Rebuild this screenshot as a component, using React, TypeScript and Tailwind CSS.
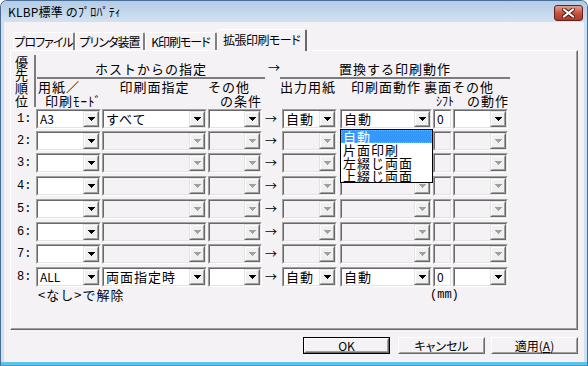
import React from 'react';

const JP = "font-['Noto_Sans_CJK_JP',sans-serif]";
const MONO = "font-['Liberation_Mono',monospace]";

type Row = {
  n: string;
  mt: string;
  a: string;
  b: string;
  c: string;
  d: string;
  e: string;
  f: string;
  g: string;
  on: boolean;
  drop?: boolean;
};

const ROWS: Row[] = [
  { n: '1', mt: 'mt-[1px]', a: 'A3', b: 'すべて', c: '', d: '自動', e: '自動', f: '0', g: '', on: true, drop: true },
  { n: '2', mt: 'mt-[2px]', a: '', b: '', c: '', d: '', e: '', f: '', g: '', on: false },
  { n: '3', mt: 'mt-[2px]', a: '', b: '', c: '', d: '', e: '', f: '', g: '', on: false },
  { n: '4', mt: 'mt-[3px]', a: '', b: '', c: '', d: '', e: '', f: '', g: '', on: false },
  { n: '5', mt: 'mt-[3px]', a: '', b: '', c: '', d: '', e: '', f: '', g: '', on: false },
  { n: '6', mt: 'mt-[3px]', a: '', b: '', c: '', d: '', e: '', f: '', g: '', on: false },
  { n: '7', mt: 'mt-[2px]', a: '', b: '', c: '', d: '', e: '', f: '', g: '', on: false },
  { n: '8', mt: 'mt-[3px]', a: 'ALL', b: '両面指定時', c: '', d: '自動', e: '自動', f: '0', g: '', on: true },
];

const MENU = ['自動', '片面印刷', '左綴じ両面', '上綴じ両面'];

function Tri({ on }: { on: boolean }) {
  return (
    <svg width="7" height="4" viewBox="0 0 7 4" shapeRendering="crispEdges" className="block">
      <path d="M0 0h7v1H0zM1 1h5v1H1zM2 2h3v1H2zM3 3h1v1H3z" fill={on ? '#000' : '#a0a0a0'} />
    </svg>
  );
}

function Txt({ t }: { t: string }) {
  if (!t) return null;
  const wide = /[^\x00-\x7f]/.test(t);
  return (
    <span className={wide ? 'pl-[2px] text-[13px] leading-[16px] tracking-[1px]' : 'pl-[2px] text-[12px] leading-[16px]'}>
      {t}
    </span>
  );
}

function Sunken({ w, on, children }: { w: string; on: boolean; children?: React.ReactNode }) {
  return (
    <div className={`${w} h-[20px] shrink-0 border border-t-[#a0a0a0] border-l-[#a0a0a0] border-b-white border-r-white`}>
      <div
        className={`flex h-full items-center border border-t-[#696969] border-l-[#696969] border-b-[#e3e3e3] border-r-[#e3e3e3] ${
          on ? 'bg-white' : 'bg-[#f5f2f5]'
        }`}
      >
        {children}
      </div>
    </div>
  );
}

function Combo({ w, on, text }: { w: string; on: boolean; text: string }) {
  return (
    <Sunken w={w} on={on}>
      <div className="flex h-full min-w-0 flex-1 items-center whitespace-nowrap">
        <Txt t={text} />
      </div>
      <div className="h-full w-[16px] shrink-0 border border-t-[#e3e3e3] border-l-[#e3e3e3] border-b-[#696969] border-r-[#696969] bg-[#f0f0f0]">
        <div className="flex h-full items-center justify-center border border-t-white border-l-white border-b-[#a0a0a0] border-r-[#a0a0a0]">
          <Tri on={on} />
        </div>
      </div>
    </Sunken>
  );
}

function DataRow({ r }: { r: Row }) {
  return (
    <div className={`${r.mt} flex h-[20px] items-center`}>
      <div className={`w-[25px] shrink-0 pl-[6px] text-[12px] ${MONO}`}>{r.n}:</div>
      <Combo w="w-[65px]" on text={r.a} />
      <div className="ml-[1px]">
        <Combo w="w-[105px]" on={r.on} text={r.b} />
      </div>
      <div className="ml-[1px]">
        <Combo w="w-[54px]" on={r.on} text={r.c} />
      </div>
      <div className="w-[20px] shrink-0 pl-[3px] text-[12px] leading-[16px]">→</div>
      <Combo w="w-[55px]" on={r.on} text={r.d} />
      <div className="relative ml-[3px]">
        <Combo w="w-[92px]" on={r.on} text={r.e} />
        {r.drop && (
          <div className="absolute left-0 top-full z-10 w-[93px] border border-black bg-white">
            {MENU.map((m, i) => (
              <div
                key={m}
                className={
                  i === 0
                    ? 'h-[13px] whitespace-nowrap border border-dotted border-[#f0a030] bg-[#3399ff] pl-[1px] text-[13px] leading-[11px] tracking-[1px] text-white'
                    : 'h-[13px] whitespace-nowrap pl-[2px] text-[13px] leading-[13px] tracking-[1px]'
                }
              >
                {m}
              </div>
            ))}
          </div>
        )}
      </div>
      <div className="ml-[1px]">
        <Sunken w="w-[19px]" on={r.on}>
          <Txt t={r.f} />
        </Sunken>
      </div>
      <div className="ml-[1px]">
        <Combo w="w-[55px]" on={r.on} text={r.g} />
      </div>
    </div>
  );
}

function Btn({ def, children }: { def?: boolean; children: React.ReactNode }) {
  return (
    <div className={`h-[17px] w-[87px] ${def ? 'border border-black' : ''}`}>
      <div className="h-full border border-t-white border-l-white border-b-[#696969] border-r-[#696969]">
        <div className="flex h-full items-center justify-center border border-t-transparent border-l-transparent border-b-[#a0a0a0] border-r-[#a0a0a0] text-[12px] leading-[12px] [font-feature-settings:'palt']">
          {children}
        </div>
      </div>
    </div>
  );
}

function Tab({ w, sel, children }: { w: string; sel?: boolean; children: React.ReactNode }) {
  if (sel) {
    return (
      <div className={`${w} relative z-10 -mb-[1px] h-[22px] whitespace-nowrap rounded-t-[2px] border-t border-l border-r-2 border-t-white border-l-white border-r-[#696969] bg-[#f5f2f5] pt-[3px] text-center text-[12px] leading-[14px] tracking-[-0.5px] [font-feature-settings:'palt']`}>
        {children}
      </div>
    );
  }
  return (
    <div className={`${w} h-[18px] whitespace-nowrap rounded-t-[2px] border-t border-l border-r-2 border-t-white border-l-white border-r-[#808080] pt-[2px] text-center text-[12px] leading-[14px] tracking-[-1px] [font-feature-settings:'palt']`}>
      {children}
    </div>
  );
}

export default function App() {
  return (
    <div className={`flex h-[366px] w-[588px] flex-col overflow-hidden rounded-t-[7px] border border-[#4a6f96] border-b-[#2ea8dc] bg-[#cfe0f2] text-black ${JP}`}>
      {/* title bar */}
      <div className="relative flex h-[21px] shrink-0 items-center bg-linear-to-b from-[#b3cbe6] to-[#d3e2f2] pl-[7px]">
        <span className="text-[12px] leading-[14px] tracking-[0.2px]">KLBP標準 のﾌﾟﾛﾊﾟﾃｨ</span>
        <div className="absolute right-[4px] top-[4px] flex h-[16px] w-[29px] items-center justify-center rounded-[3px] border border-[#5e2320] bg-linear-to-b from-[#e0a091] via-[#c8523f] to-[#b23a26]">
          <svg width="13" height="10" viewBox="0 0 13 10">
            <path d="M2 1.5L11 8.5M11 1.5L2 8.5" stroke="#4a1a16" strokeWidth="4" strokeLinecap="square" />
            <path d="M2 1.5L11 8.5M11 1.5L2 8.5" stroke="#ffffff" strokeWidth="2" strokeLinecap="square" />
          </svg>
        </div>
      </div>

      {/* body */}
      <div className="mx-[3px] flex flex-1 flex-col bg-[#f5f2f5] px-[6px] pt-[7px]">
        <div className="flex h-[21px] items-end pl-[3px]">
          <Tab w="w-[62px]">プロファイル</Tab>
          <Tab w="w-[70px]">プリンタ装置</Tab>
          <Tab w="w-[72px]">K印刷モード</Tab>
          <Tab w="w-[90px]" sel>
            拡張印刷モード
          </Tab>
        </div>

        {/* tab panel */}
        <div className="h-[280px] border-t border-l border-r border-b border-t-white border-l-white border-r-[#696969] border-b-[#696969]">
          <div className="h-full border-r border-b border-r-[#a0a0a0] border-b-[#a0a0a0]">
            {/* header */}
            <div className="flex pt-[4px]">
              <div className="flex w-[25px] shrink-0 pl-[4px]">
                <div className="flex w-[19px] flex-col text-[13px] leading-[13px]">
                  <span>優</span>
                  <span>先</span>
                  <span>順</span>
                  <span>位</span>
                </div>
                <div className="h-[52px] w-[2px] bg-[#7c7c7c]" />
              </div>
              <div className="flex flex-col text-[13px] leading-[14px]">
                <div className="flex">
                  <div className="ml-[1px] flex w-[228px] flex-col">
                    <div className="flex h-[22px] items-end justify-center pb-[1px] tracking-[1px]">ホストからの指定</div>
                    <div className="h-[2px] bg-[#7c7c7c]" />
                  </div>
                  <div className="flex h-[22px] w-[15px] items-end pb-[2px] pl-[3px] text-[12px]">→</div>
                  <div className="flex w-[230px] flex-col">
                    <div className="flex h-[22px] items-end justify-center pb-[1px] tracking-[1px]">置換する印刷動作</div>
                    <div className="h-[2px] bg-[#7c7c7c]" />
                  </div>
                </div>
                <div className="flex h-[29px] pt-[1px]">
                  <div className="flex w-[65px] flex-col">
                    <span className="pl-[2px] tracking-[1px]">用紙／</span>
                    <span className="whitespace-nowrap pl-[9px] tracking-[1px]">印刷ﾓｰﾄﾞ</span>
                  </div>
                  <div className="ml-[1px] w-[105px] text-center tracking-[1px]">印刷面指定</div>
                  <div className="ml-[1px] flex w-[54px] flex-col">
                    <span className="tracking-[1px]">その他</span>
                    <span className="self-end whitespace-nowrap tracking-[1px]">の条件</span>
                  </div>
                  <div className="w-[20px]" />
                  <div className="-ml-[2px] w-[57px] whitespace-nowrap tracking-[1px]">出力用紙</div>
                  <div className="ml-[3px] w-[92px] text-center tracking-[1px]">印刷面動作</div>
                  <div className="ml-[1px] flex w-[76px] flex-col">
                    <span className="-ml-[9px] whitespace-nowrap tracking-[1px]">裏面その他</span>
                    <div className="flex justify-between">
                      <span className="pl-[3px] text-[12px]">ｼﾌﾄ</span>
                      <span className="tracking-[1px]">の動作</span>
                    </div>
                  </div>
                </div>
              </div>
            </div>

            {/* rows */}
            {ROWS.map((r) => (
              <DataRow key={r.n} r={r} />
            ))}

            <div className="mt-[1px] flex h-[14px] text-[13px] leading-[14px]">
              <span className="w-[419px] shrink-0 pl-[27px] tracking-[1px]">&lt;なし&gt;で解除</span>
              <span className={`text-[12px] ${MONO}`}>(mm)</span>
            </div>
          </div>
        </div>

        {/* buttons */}
        <div className="mt-[7px] flex justify-end">
          <Btn def>OK</Btn>
          <div className="ml-[8px]">
            <Btn>キャンセル</Btn>
          </div>
          <div className="ml-[6px]">
            <Btn>
              適用(<span className="underline">A</span>)
            </Btn>
          </div>
        </div>
      </div>
      <div className="h-[3px] shrink-0 bg-[#5cc4ea]" />
    </div>
  );
}
